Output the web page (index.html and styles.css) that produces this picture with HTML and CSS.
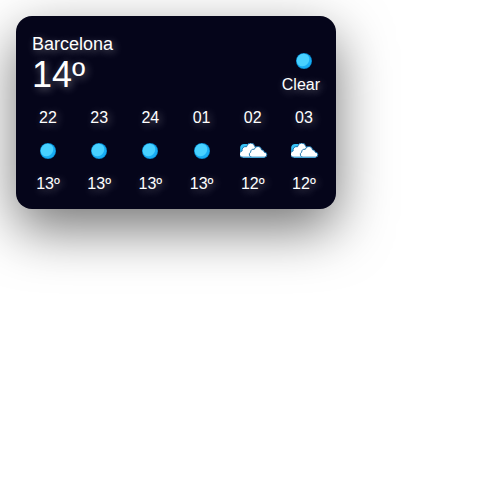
FILE: index.html
```html
<!DOCTYPE html>
<html lang="en">
<head>
<meta charset="utf-8">
<title>Weather</title>
<link rel="stylesheet" href="styles.css">
</head>
<body>
<svg class="defs" aria-hidden="true">
  <symbol id="clear" viewBox="0 0 16 16">
    <circle cx="8" cy="8" r="8" fill="#0888cb"/>
    <circle cx="8" cy="8" r="7.3" fill="#18adf4"/>
    <ellipse cx="7" cy="7" rx="6.6" ry="5.9" transform="rotate(-45 7 7)" fill="#48d1ff"/>
  </symbol>
  <symbol id="cloudy" viewBox="0 0 28 16">
    <path d="M.2 10V4Q1 1 4 .9H8L6 9Z" fill="#38c3f7"/>
    <path d="M3 14.2A3.1 3.1 0 0 1 2.1 8A3.6 3.6 0 0 1 6.6 3.7A4.15 4.15 0 0 1 14.8 3.5A4 4 0 0 1 18 9V14.2Z" fill="#fff" stroke="#0a69a5" stroke-width=".9"/>
    <path d="M12 14.2A2.7 2.7 0 0 1 10.6 9.2A3.2 3.2 0 0 1 14.3 6.3A3.65 3.65 0 0 1 21.5 6.8A2.8 2.8 0 0 1 24.3 9.2A2.5 2.5 0 0 1 24.4 14.2Z" fill="#fff" stroke="#0a69a5" stroke-width=".9"/>
    <path d="M2.8 14.4H24.6" stroke="#4fafdf" fill="none"/>
  </symbol>
</svg>
<main class="card">
  <header class="current">
    <div class="place">
      <div class="city">Barcelona</div>
      <div class="degrees">14º</div>
    </div>
    <div class="condition">
      <svg class="sun"><use href="#clear"/></svg>
      <div>Clear</div>
    </div>
  </header>
  <section class="hours">
    <div class="hour"><span>22</span><div class="icon"><svg class="sun"><use href="#clear"/></svg></div><span>13º</span></div>
    <div class="hour"><span>23</span><div class="icon"><svg class="sun"><use href="#clear"/></svg></div><span>13º</span></div>
    <div class="hour"><span>24</span><div class="icon"><svg class="sun"><use href="#clear"/></svg></div><span>13º</span></div>
    <div class="hour"><span>01</span><div class="icon"><svg class="sun"><use href="#clear"/></svg></div><span>13º</span></div>
    <div class="hour"><span>02</span><div class="icon"><svg class="cloud"><use href="#cloudy"/></svg></div><span>12º</span></div>
    <div class="hour"><span>03</span><div class="icon"><svg class="cloud"><use href="#cloudy"/></svg></div><span>12º</span></div>
  </section>
</main>
</body>
</html>
```

FILE: styles.css
```css
* { box-sizing: border-box; }
body {
  margin: 0;
  min-height: 100vh;
  padding: 16px;
  background: #fff;
  font-family: "Liberation Sans", Arial, sans-serif;
}
.defs { display: none; }
svg { display: block; }
.card {
  display: flex;
  flex-direction: column;
  justify-content: space-between;
  width: 320px;
  height: 193px;
  padding: 16px;
  border-radius: 16px;
  background: #05051a;
  box-shadow: 0 20px 54px rgba(0, 0, 0, .54);
  color: #fff;
  font-size: 16px;
  line-height: 18px;
  text-shadow: 2px 2px 8px rgba(255, 255, 255, .4);
}
.current {
  display: flex;
  justify-content: space-between;
  align-items: flex-end;
  height: 62px;
}
.place { align-self: flex-start; padding-top: 2px; }
.city { font-size: 18px; line-height: 20px; }
.degrees { font-size: 36px; line-height: 42px; }
.condition {
  display: flex;
  flex-direction: column;
  align-items: flex-end;
}
.condition .sun { margin: 0 8px 7px; }
.sun { width: 16px; height: 16px; }
.cloud { width: 28px; height: 16px; flex: none; }
.hours { display: flex; justify-content: space-between; }
.hour {
  display: flex;
  flex-direction: column;
  align-items: center;
  width: 32px;
}
.icon {
  display: flex;
  align-items: center;
  justify-content: center;
  width: 32px;
  height: 48px;
}
.icon .cloud { margin-left: 2px; }
```
